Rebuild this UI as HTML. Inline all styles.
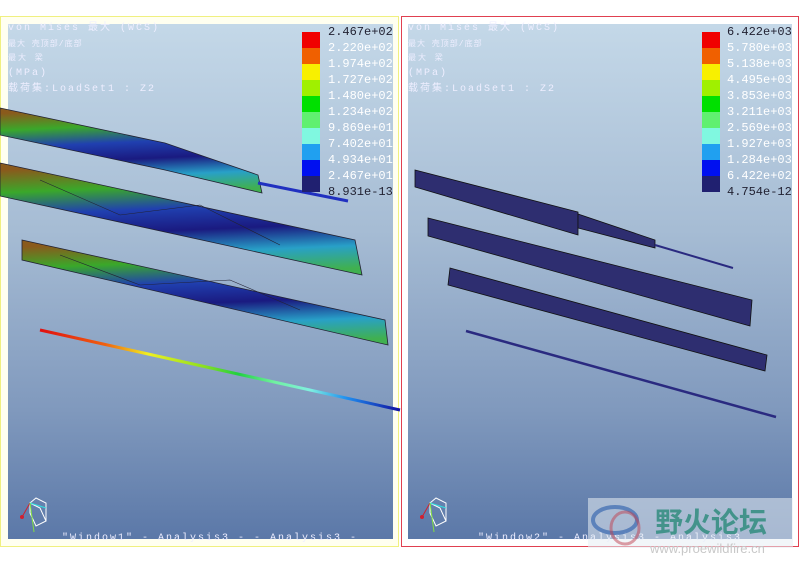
<!DOCTYPE html>
<html><head><meta charset="utf-8"><style>
body{margin:0;width:800px;height:565px;background:#fff;overflow:hidden;font-family:"Liberation Mono","Noto Sans CJK SC",monospace}
</style></head><body>
<svg width="800" height="565" xmlns="http://www.w3.org/2000/svg">
<defs>
<linearGradient id="bg" x1="0" y1="0" x2="0" y2="1">
<stop offset="0" stop-color="#c4d8e8"/><stop offset="0.4" stop-color="#a6bcd4"/><stop offset="0.75" stop-color="#8099bd"/><stop offset="1" stop-color="#5b78a8"/>
</linearGradient>
<linearGradient id="bm" x1="0" y1="0" x2="0" y2="1" gradientTransform="rotate(-8 0.5 0.5)">
<stop offset="0" stop-color="#8a5a1c"/><stop offset="0.2" stop-color="#3aa82a"/><stop offset="0.4" stop-color="#2040b0"/><stop offset="0.6" stop-color="#1a1a80"/><stop offset="0.8" stop-color="#28a0c8"/><stop offset="1" stop-color="#40b050"/>
</linearGradient>
<linearGradient id="rod" x1="0" y1="0" x2="1" y2="0">
<stop offset="0" stop-color="#e01010"/><stop offset="0.18" stop-color="#f06010"/><stop offset="0.3" stop-color="#f0f020"/><stop offset="0.45" stop-color="#90e020"/><stop offset="0.55" stop-color="#20d040"/><stop offset="0.65" stop-color="#70f0a0"/><stop offset="0.75" stop-color="#80f0e0"/><stop offset="0.85" stop-color="#2090f0"/><stop offset="1" stop-color="#1010a0"/>
</linearGradient>
</defs>
<rect x="0.5" y="16.5" width="398" height="530" fill="#fffff0" stroke="#f0f080"/>
<rect x="401.5" y="16.5" width="397" height="530" fill="#fff" stroke="#e04050"/>
<rect x="8" y="24" width="385" height="515" fill="url(#bg)"/>
<rect x="408" y="24" width="384" height="515" fill="url(#bg)"/>
<!-- left beams -->
<polygon points="0,108 165,143 258,175 262,193 165,170 0,135" fill="url(#bm)" stroke="#223" stroke-width="0.8"/>
<line x1="258" y1="183" x2="348" y2="201" stroke="#2030c0" stroke-width="3"/>
<polygon points="0,163 355,240 362,275 0,196" fill="url(#bm)" stroke="#223" stroke-width="0.8"/>
<polygon points="22,240 385,320 388,345 22,260" fill="url(#bm)" stroke="#223" stroke-width="0.8"/>
<polyline points="60,255 140,285 230,280 300,310" fill="none" stroke="#223" stroke-width="0.6"/>
<polyline points="40,180 120,215 200,205 280,245" fill="none" stroke="#223" stroke-width="0.6"/>
<line x1="40" y1="330" x2="400" y2="410" stroke="url(#rod)" stroke-width="3"/>
<!-- right beams -->
<polygon points="415,170 578,212 578,235 415,187" fill="#2e2e70" stroke="#111" stroke-width="0.8"/>
<polygon points="578,214 655,240 655,248 578,228" fill="#2e2e70" stroke="#111" stroke-width="0.8"/>
<line x1="655" y1="245" x2="733" y2="268" stroke="#2a2a80" stroke-width="2"/>
<polygon points="428,218 752,300 750,326 428,236" fill="#2e2e70" stroke="#111" stroke-width="0.8"/>
<polygon points="450,268 767,355 765,371 448,285" fill="#2e2e70" stroke="#111" stroke-width="0.8"/>
<line x1="466" y1="331" x2="776" y2="417" stroke="#2a2a80" stroke-width="2.5"/>
<!-- legends -->
<g id="lg">
<rect x="302" y="32" width="18" height="16" fill="#f00000"/>
<rect x="302" y="48" width="18" height="16" fill="#f06000"/>
<rect x="302" y="64" width="18" height="16" fill="#f8f000"/>
<rect x="302" y="80" width="18" height="16" fill="#a0f000"/>
<rect x="302" y="96" width="18" height="16" fill="#00e000"/>
<rect x="302" y="112" width="18" height="16" fill="#60f070"/>
<rect x="302" y="128" width="18" height="16" fill="#80f8e0"/>
<rect x="302" y="144" width="18" height="16" fill="#20a0f0"/>
<rect x="302" y="160" width="18" height="16" fill="#0010f0"/>
<rect x="302" y="176" width="18" height="16" fill="#202070"/>
</g>
<use href="#lg" x="400"/>
<g font-size="12" fill="#fff">
<text x="328" y="35" fill="#223">2.467e+02</text>
<text x="328" y="51">2.220e+02</text><text x="328" y="67">1.974e+02</text><text x="328" y="83">1.727e+02</text><text x="328" y="99">1.480e+02</text><text x="328" y="115">1.234e+02</text><text x="328" y="131">9.869e+01</text><text x="328" y="147">7.402e+01</text><text x="328" y="163">4.934e+01</text><text x="328" y="179">2.467e+01</text><text x="328" y="195" fill="#223">8.931e-13</text>
<text x="727" y="35" fill="#223">6.422e+03</text>
<text x="727" y="51">5.780e+03</text><text x="727" y="67">5.138e+03</text><text x="727" y="83">4.495e+03</text><text x="727" y="99">3.853e+03</text><text x="727" y="115">3.211e+03</text><text x="727" y="131">2.569e+03</text><text x="727" y="147">1.927e+03</text><text x="727" y="163">1.284e+03</text><text x="727" y="179">6.422e+02</text><text x="727" y="195" fill="#223">4.754e-12</text>
</g>
<g font-size="10" fill="#eef" letter-spacing="2">
<text x="8" y="30">von Mises 最大 (WCS)</text><text x="8" y="46" font-size="8" letter-spacing="1">最大 壳顶部/底部</text><text x="8" y="60" font-size="8">最大 梁</text><text x="8" y="75">(MPa)</text><text x="8" y="91">载荷集:LoadSet1 :  Z2</text>
<text x="408" y="30">von Mises 最大 (WCS)</text><text x="408" y="46" font-size="8" letter-spacing="1">最大 壳顶部/底部</text><text x="408" y="60" font-size="8">最大 梁</text><text x="408" y="75">(MPa)</text><text x="408" y="91">载荷集:LoadSet1 :  Z2</text>
<text x="62" y="540">"Window1" - Analysis3 - - Analysis3 -</text>
<text x="478" y="540">"Window2" - Analysis3 - Analysis3</text>
</g>
<!-- triads -->
<g id="tr" fill="none" stroke-width="1">
<path d="M30,503 L40,508 L46,521 L36,526 L30,513 Z M30,503 L36,498 L46,503 L46,521" stroke="#fff"/>
<line x1="30" y1="503" x2="22" y2="517" stroke="#d02030"/><circle cx="22" cy="517" r="2" fill="#d02030"/>
<line x1="30" y1="503" x2="46" y2="508" stroke="#30e0e0"/>
<line x1="30" y1="503" x2="34" y2="532" stroke="#80e040"/>
</g>
<use href="#tr" x="400"/>
<!-- watermark -->
<rect x="588" y="498" width="205" height="50" fill="#e8eef4" opacity="0.55"/>
<ellipse cx="615" cy="520" rx="22" ry="13" fill="none" stroke="#3a6ab0" stroke-width="4" opacity="0.7"/>
<ellipse cx="625" cy="528" rx="14" ry="16" fill="none" stroke="#c04050" stroke-width="3" opacity="0.5"/>
<text x="655" y="532" font-family="'Noto Sans CJK SC',sans-serif" font-size="28" font-weight="bold" fill="#2a8a7a" opacity="0.8">野火论坛</text>
<text x="650" y="553" font-family="'Liberation Sans',sans-serif" font-size="13" fill="#c8c8c8">www.proewildfire.cn</text>
</svg>
</body></html>
